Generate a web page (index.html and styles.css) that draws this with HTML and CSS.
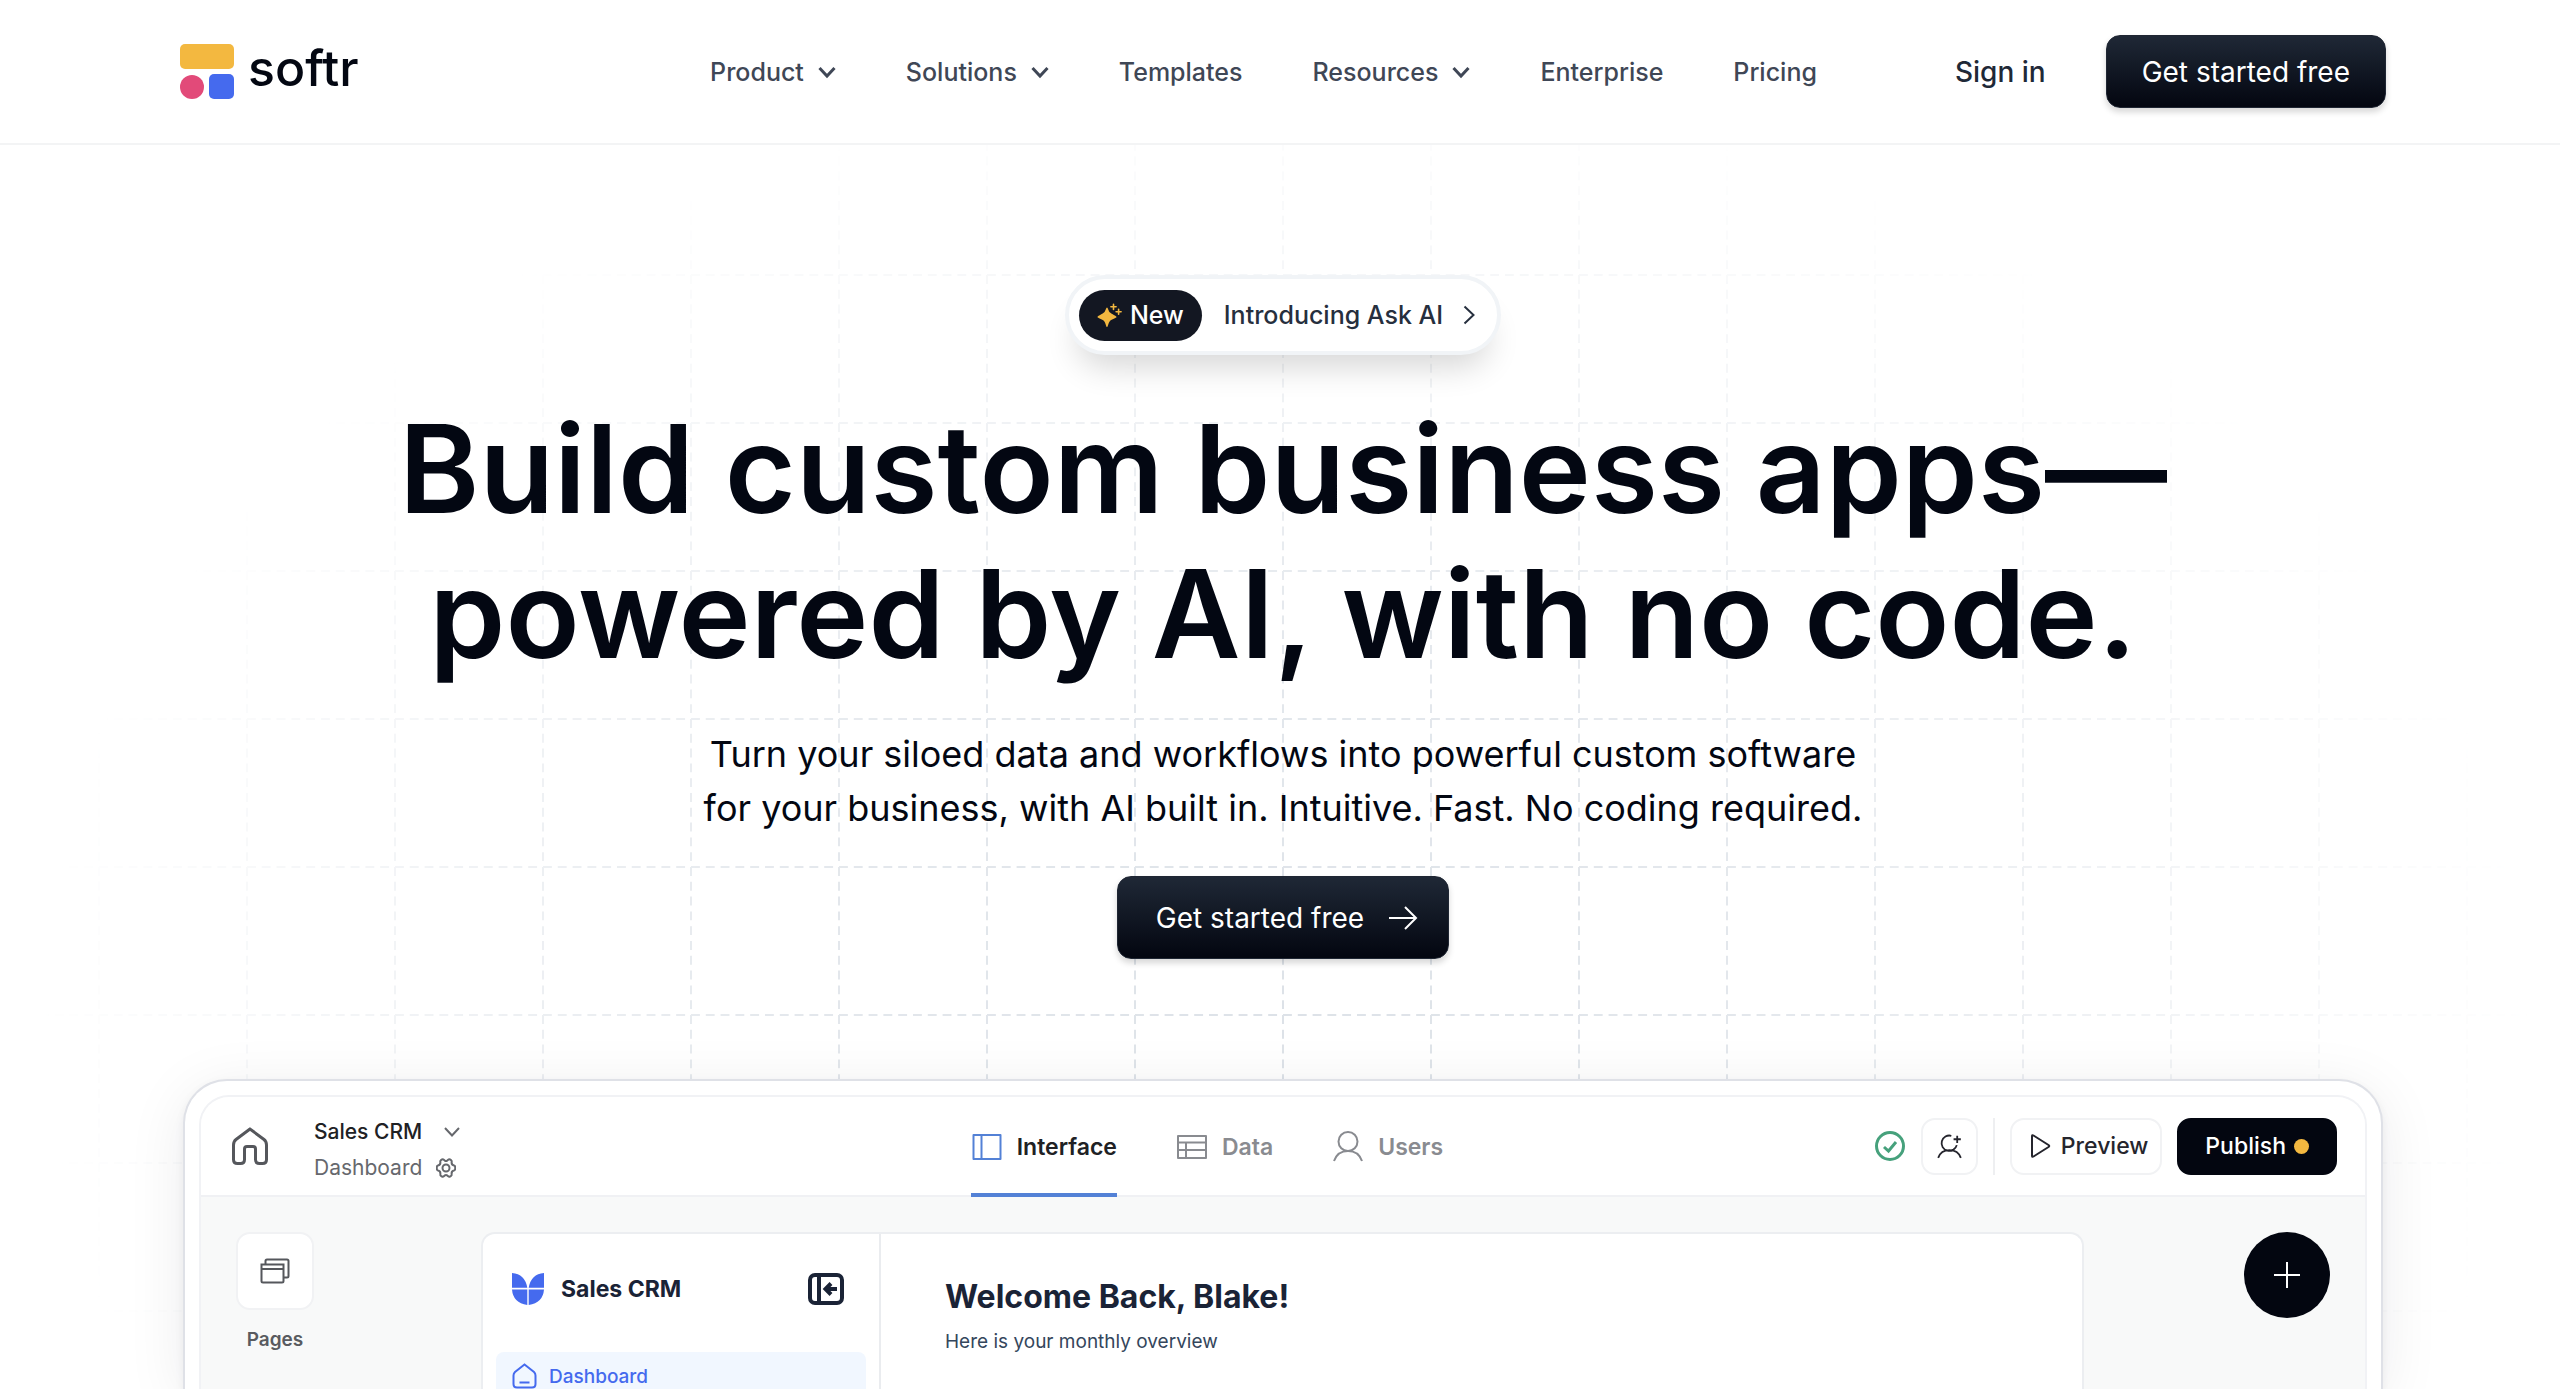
FILE: index.html
```
<!DOCTYPE html>
<html lang="en">
<head>
<meta charset="utf-8">
<meta name="viewport" content="width=device-width, initial-scale=1">
<title>Softr – Build custom business apps</title>
<link rel="stylesheet" href="styles.css">
</head>
<body>
<header class="site-header">
  <div class="header-inner">
    <a class="logo" href="#">
      <svg width="54" height="56" viewBox="0 0 54 56" aria-hidden="true">
        <rect x="0" y="0" width="54" height="25" rx="5" fill="#f3b840"/>
        <circle cx="12" cy="43" r="12" fill="#e24a79"/>
        <rect x="29" y="30" width="25" height="25" rx="5" fill="#456aee"/>
      </svg>
      <span>softr</span>
    </a>
    <nav class="main-nav" aria-label="Main">
      <a href="#">Product <svg class="caret" viewBox="4 0 18 26"><path d="M5.500 9l7.500 8 7.500-8"/></svg></a>
      <a href="#">Solutions <svg class="caret" viewBox="4 0 18 26"><path d="M5.500 9l7.500 8 7.500-8"/></svg></a>
      <a href="#">Templates</a>
      <a href="#">Resources <svg class="caret" viewBox="4 0 18 26"><path d="M5.500 9l7.500 8 7.500-8"/></svg></a>
      <a href="#">Enterprise</a>
      <a href="#">Pricing</a>
    </nav>
    <div class="account">
      <a class="sign-in" href="#">Sign in</a>
      <button class="btn" type="button">Get started free</button>
    </div>
  </div>
</header>

<main class="hero">
  <svg class="grid-lines" aria-hidden="true">
    <svg x="50%" overflow="visible">
      <defs>
        <pattern id="cell" x="-1" y="129" width="148" height="148" patternUnits="userSpaceOnUse">
          <path d="M1 1V149M1 1H149" pathLength="200" stroke="#dde2e8" stroke-width="2" stroke-dasharray="6 4" fill="none"/>
        </pattern>
      </defs>
      <rect x="-1480" y="0" width="2960" height="1400" fill="url(#cell)"/>
    </svg>
  </svg>

  <a class="pill" href="#">
    <span class="badge">
      <svg width="25" height="25" viewBox="0 0 25 25" aria-hidden="true" fill="#f3b840">
        <path d="M10 4.500c.9 0 1.500 3.600 3 5.100 1.600 1.600 6.500 3.300 6.500 4.400s-4.900 2.200-6.500 3.900C11.500 19.400 10.900 24 10 24s-1.500-4.600-3-6.100C5.400 16.200.5 15.100.5 14S5.400 11.200 7 9.600c1.500-1.500 2.100-5.100 3-5.100z"/>
        <path d="M16.500 1.200v5.200M13.900 3.800h5.200M21.600 6.200v5M19.100 8.700h5" stroke="#f3b840" stroke-width="1.600" stroke-linecap="round"/>
      </svg>
      New
    </span>
    <span class="pill-text">Introducing Ask AI</span>
    <svg class="pill-arrow" width="12" height="20" viewBox="0 0 12 20" aria-hidden="true"><path d="M1.500 1.500l9 8.500-9 8.500"/></svg>
  </a>

  <h1>Build custom business apps—<br>powered by AI, with no code.</h1>
  <p class="lead">Turn your siloed data and workflows into powerful custom software<br>for your business, with AI built in. Intuitive. Fast. No coding required.</p>

  <button class="btn btn-large" type="button">Get started free
    <svg width="30" height="26" viewBox="0 0 30 26" aria-hidden="true"><path d="M1 13h27M17 2l11 11-11 11"/></svg>
  </button>

  <section class="mock" aria-label="App builder preview">
    <div class="builder">
      <div class="topbar">
        <div class="app">
          <svg class="home" width="36" height="38" viewBox="0 0 36 38" aria-hidden="true"><path d="M18 2L4 12.500Q1.500 14.500 1.500 18v14.500q0 4 4 4h3q4 0 4-4V22q0-2.500 2.500-2.500h6q2.500 0 2.500 2.500v10.500q0 4 4 4h3q4 0 4-4V18q0-3.500-2.500-5.500z"/></svg>
          <div class="titles">
            <div class="title-row app-name">Sales CRM
              <svg width="16" height="10" viewBox="0 0 16 10" aria-hidden="true"><path d="M1 1l7 7.500L15 1"/></svg>
            </div>
            <div class="title-row page-name">Dashboard
              <svg width="20" height="20" viewBox="0 0 20 20" aria-hidden="true"><path d="M6 1.500q1-.5 1.800.2l1 .9q1.200.9 2.400 0l1-.9q.8-.7 1.800-.2l1 .6q.9.600.700 1.700-.5 3.200 2.300 3.700 1.200.3 1.200 1.500v2q0 1.200-1.200 1.500-2.800.5-2.300 3.700.2 1.100-.7 1.700l-1 .6q-1 .5-1.800-.2l-1-.9q-1.200-.9-2.400 0l-1 .9q-.8.7-1.800.2l-1-.6q-.9-.6-.7-1.700.5-3.200-2.300-3.700-1.200-.3-1.200-1.500V9q0-1.200 1.200-1.500 2.800-.5 2.300-3.700Q4.100 2.700 5 2.100z"/><circle cx="10" cy="10" r="3.500"/></svg>
            </div>
          </div>
        </div>
        <nav class="tabs" aria-label="Builder">
          <a class="tab active" href="#"><svg viewBox="0 0 32 32"><path d="M2.500 4h27v24h-27zM10.500 4v24" stroke-linejoin="round"/></svg>Interface</a>
          <a class="tab" href="#"><svg viewBox="0 0 32 32"><path d="M2 5h28v22H2zM2 11.500h28M2 19h28M10 11.500V27" stroke-linejoin="round"/></svg>Data</a>
          <a class="tab" href="#"><svg viewBox="0 0 32 32"><circle cx="16" cy="10.500" r="9.500"/><path d="M2 30q3.500-10 14-10t14 10"/></svg>Users</a>
        </nav>
        <div class="actions">
          <svg class="saved" viewBox="0 0 32 32" role="img" aria-label="Saved"><circle cx="16" cy="16" r="13.500"/><path d="M10 17l4.500 4 7.500-9"/></svg>
          <button class="tool" type="button" aria-label="Invite user">
            <svg viewBox="0 0 32 32"><path d="M18 4.200A8.500 8.500 0 1 0 24 14.500M3.500 28.500q3-8.500 12.500-8.500t12.500 8.500M24.500 4v8M20.500 8h8"/></svg>
          </button>
          <span class="divider"></span>
          <button class="tool preview" type="button">
            <svg width="21" height="26" viewBox="0 0 21 26" aria-hidden="true"><path d="M2 3.300v19.400q0 1.700 1.500.8L18.500 14q1.500-1 0-2L3.500 2.500Q2 1.600 2 3.300z"/></svg>Preview
          </button>
          <button class="tool publish" type="button">Publish<span class="dot"></span></button>
        </div>
      </div>

      <div class="workspace">
        <div class="rail">
          <button class="rail-btn" type="button" aria-label="Pages">
            <svg width="30" height="26" viewBox="0 0 30 26" aria-hidden="true"><path d="M1.500 6.500h22V23q0 1.500-1.500 1.500H3Q1.500 24.500 1.500 23zM1.500 11h22M5.500 6.500V3q0-1.500 1.500-1.500h20q1.500 0 1.500 1.500v15q0 1.500-1.500 1.500h-3.500"/></svg>
          </button>
          <span>Pages</span>
        </div>
        <div class="canvas">
          <aside class="sidebar">
            <div class="sidebar-head">
              <svg width="32" height="32" viewBox="0 0 32 32" aria-hidden="true" fill="#456aee"><path d="M0 0q13 1 15.300 14.800H0zM32 0Q19 1 16.700 14.800H32zM0 16.600h15.300V32Q1 30 0 16.600zM32 16.600H16.700V32Q31 30 32 16.600z"/></svg>
              <strong>Sales CRM</strong>
              <button class="collapse" type="button" aria-label="Collapse sidebar">
                <svg width="36" height="32" viewBox="0 0 36 32"><rect x="2" y="2" width="32" height="28" rx="5"/><path d="M11 2v28M29 16H18M23 10.500L17.500 16l5.500 5.500"/></svg>
              </button>
            </div>
            <a class="side-item" href="#">
              <svg width="25" height="26" viewBox="0 0 25 26" aria-hidden="true"><path d="M12.500 1.500L3 9Q1.500 10.500 1.500 12.500V21q0 3.500 3.500 3.500h15q3.500 0 3.500-3.500v-8.500q0-2-1.500-3.500zM7.500 19.500h10"/></svg>
              Dashboard
            </a>
          </aside>
          <div class="content">
            <h2>Welcome Back, Blake!</h2>
            <p>Here is your monthly overview</p>
          </div>
        </div>
        <button class="add" type="button" aria-label="Add block">
          <svg width="28" height="28" viewBox="0 0 28 28"><path d="M14 1v26M1 14h26"/></svg>
        </button>
      </div>
    </div>
  </section>
</main>
</body>
</html>
```
FILE: styles.css
```
* { box-sizing: border-box; }

body {
  margin: 0;
  padding-left: 6px;
  height: 100vh;
  overflow: hidden;
  display: flex;
  flex-direction: column;
  background: #fff;
  color: #030712;
  font-family: Inter, "Liberation Sans", sans-serif;
}

a { color: inherit; text-decoration: none; }
button { font: inherit; cursor: pointer; }
svg { flex: none; display: block; }

/* Header */
.site-header {
  flex: none;
  margin-left: -6px;
  padding-left: 6px;
  border-bottom: 2px solid #f3f4f5;
}
.header-inner {
  display: flex;
  align-items: center;
  gap: 138px;
  max-width: 2206px;
  height: 143px;
  margin: 0 auto;
}
.logo {
  display: flex;
  align-items: center;
  gap: 14px;
  font-size: 50px;
  line-height: 56px;
  font-weight: 500;
}
.logo span { margin-top: -8px; }
.main-nav {
  display: flex;
  gap: 70px;
  margin-left: auto;
  font-size: 25px;
  font-weight: 500;
  color: #3f4756;
}
.main-nav a { display: flex; align-items: center; gap: 14px; }
.caret {
  width: 18px;
  height: 26px;
  fill: none;
  stroke: currentColor;
  stroke-width: 3;
}
.account { display: flex; align-items: center; gap: 60px; }
.sign-in { font-size: 28px; font-weight: 500; color: #1f2937; }

.btn {
  display: flex;
  align-items: center;
  justify-content: center;
  height: 73px;
  padding: 0 35px;
  border: 1px solid #1f2633;
  border-radius: 14px;
  background: linear-gradient(#1f2836, #030610);
  box-shadow: 0 4px 6px rgba(0, 0, 0, .16);
  color: #fff;
  font-size: 28px;
}
.btn-large { flex: none; height: 83px; padding: 0 30px 0 38px; gap: 24px; }
.btn svg { fill: none; stroke: currentColor; stroke-width: 2; }

/* Hero */
.hero {
  position: relative;
  flex: 1;
  min-height: 0;
  display: flex;
  flex-direction: column;
  align-items: center;
  padding-top: 130px;
}
.hero > * { position: relative; }
.hero > .grid-lines {
  position: absolute;
  inset: 0;
  width: 100%;
  height: 100%;
  -webkit-mask-image: radial-gradient(1250px 940px at 50% 870px, #000 0%, rgba(0, 0, 0, .8) 40%, transparent 100%);
  mask-image: radial-gradient(1250px 940px at 50% 870px, #000 0%, rgba(0, 0, 0, .8) 40%, transparent 100%);
}

.pill {
  display: flex;
  align-items: center;
  flex: none;
  height: 80px;
  padding: 0 22px 0 10px;
  border: 4px solid #f1f4f7;
  border-radius: 40px;
  background: #fff;
  box-shadow: 0 24px 32px -12px rgba(0, 0, 0, .16);
  font-size: 25px;
  font-weight: 500;
  color: #262f3e;
}
.badge {
  display: flex;
  align-items: center;
  gap: 8px;
  height: 51px;
  padding: 0 18px;
  border-radius: 26px;
  background: #131722;
  color: #fff;
}
.pill-text { margin: 0 20px 0 22px; }
.pill-arrow { fill: none; stroke: currentColor; stroke-width: 2; }

h1 {
  flex: none;
  margin: 41px 0 0;
  font-size: 122px;
  line-height: 145px;
  font-weight: 600;
  text-align: center;
  white-space: nowrap;
}
.lead {
  flex: none;
  margin: 41px 0;
  font-size: 36px;
  line-height: 54px;
  text-align: center;
}

/* Product mock */
.mock {
  flex: 1;
  min-height: 0;
  display: flex;
  width: 90%;
  max-width: 2200px;
  margin-top: 120px;
  padding: 14px 14px 0;
  border: 2px solid #dfe1e7;
  border-bottom: 0;
  border-radius: 44px 44px 0 0;
  background: #fff;
  box-shadow: 0 10px 60px rgba(16, 24, 40, .08), 0 4px 10px rgba(16, 24, 40, .06);
}
.builder {
  flex: 1;
  display: flex;
  flex-direction: column;
  overflow: hidden;
  border: 2px solid #f1f2f5;
  border-bottom: 0;
  border-radius: 30px 30px 0 0;
  background: #f8f9f9;
}
.topbar {
  flex: none;
  display: flex;
  justify-content: space-between;
  align-items: center;
  height: 100px;
  padding: 0 28px 0 31px;
  border-bottom: 2px solid #f0f1f4;
  background: #fff;
}
.app { display: flex; align-items: center; gap: 46px; min-width: 308px; }
.home { fill: none; stroke: #55575c; stroke-width: 3; }
.titles { padding-top: 8px; font-size: 21px; line-height: 36px; }
.title-row { display: flex; align-items: center; }
.title-row svg { fill: none; stroke: #66686d; stroke-width: 2; }
.app-name { gap: 22px; font-weight: 500; color: #202124; }
.page-name { gap: 14px; color: #66686d; }

.tabs { display: flex; align-self: stretch; gap: 59px; font-size: 23px; font-weight: 600; }
.tab {
  display: flex;
  align-items: center;
  gap: 14px;
  margin-bottom: -2px;
  padding-top: 4px;
  border-bottom: 4px solid transparent;
  color: #898b90;
}
.tab svg { width: 32px; height: 32px; fill: none; stroke: currentColor; stroke-width: 2; }
.tab.active { color: #202124; border-color: #5381d6; }
.tab.active svg { color: #5381d6; }

.actions { display: flex; align-items: center; gap: 15px; }
.saved { width: 32px; height: 32px; fill: none; stroke: #46a17c; stroke-width: 3; }
.tool {
  display: flex;
  align-items: center;
  justify-content: center;
  min-width: 57px;
  height: 57px;
  padding: 0 12px;
  border: 2px solid #f1f2f4;
  border-radius: 14px;
  background: #fff;
  color: #25252d;
  font-size: 23px;
  font-weight: 500;
}
.tool svg { fill: none; stroke: currentColor; stroke-width: 2; }
.tool > svg[viewBox="0 0 32 32"] { width: 29px; height: 29px; }
.divider { width: 2px; height: 57px; background: #eeeff1; }
.tool.preview { gap: 10px; padding: 0 12px 0 18px; }
.tool.publish { gap: 8px; padding: 0 26px; border-color: #030610; background: #030610; color: #fff; }
.dot { width: 15px; height: 15px; border-radius: 50%; background: #f3b840; }

.workspace { flex: 1; min-height: 0; display: flex; align-items: flex-start; padding: 35px 35px 0; }
.rail {
  display: flex;
  flex-direction: column;
  align-items: center;
  gap: 16px;
  font-size: 19px;
  line-height: 28px;
  font-weight: 600;
  color: #595b60;
}
.rail-btn {
  display: grid;
  place-items: center;
  width: 78px;
  height: 78px;
  padding: 0;
  border: 2px solid #f1f2f4;
  border-radius: 14px;
  background: #fff;
}
.rail-btn svg { fill: none; stroke: #55575c; stroke-width: 2; }
.canvas {
  flex: 1;
  align-self: stretch;
  display: flex;
  overflow: hidden;
  margin: 0 160px 0 167px;
  border: 2px solid #eceef1;
  border-bottom: 0;
  border-radius: 14px 14px 0 0;
  background: #fff;
}
.sidebar { flex: none; width: 398px; padding: 38px 13px 0; border-right: 2px solid #eaecef; }
.sidebar-head {
  display: flex;
  align-items: center;
  gap: 17px;
  height: 34px;
  margin: 0 22px 46px 16px;
  font-size: 23px;
  color: #1a2336;
}
.sidebar-head strong { font-weight: 700; }
.collapse { margin-left: auto; padding: 0; border: 0; background: none; color: #1a2336; }
.collapse svg { fill: none; stroke: currentColor; stroke-width: 4; }
.side-item {
  display: flex;
  align-items: center;
  gap: 12px;
  height: 48px;
  padding-left: 16px;
  border-radius: 8px;
  background: #f1f7ff;
  color: #456aee;
  font-size: 19px;
  font-weight: 500;
}
.side-item svg { fill: none; stroke: currentColor; stroke-width: 2; }
.content { padding: 43px 64px 0; }
.content h2 { margin: 0; font-size: 32px; line-height: 40px; font-weight: 700; color: #1a2336; }
.content p { margin: 11px 0 0; font-size: 19px; line-height: 28px; color: #34465c; }
.add {
  display: grid;
  place-items: center;
  width: 86px;
  height: 86px;
  padding: 0;
  border: 0;
  border-radius: 50%;
  background: #030610;
}
.add svg { fill: none; stroke: #fff; stroke-width: 2; }
```
